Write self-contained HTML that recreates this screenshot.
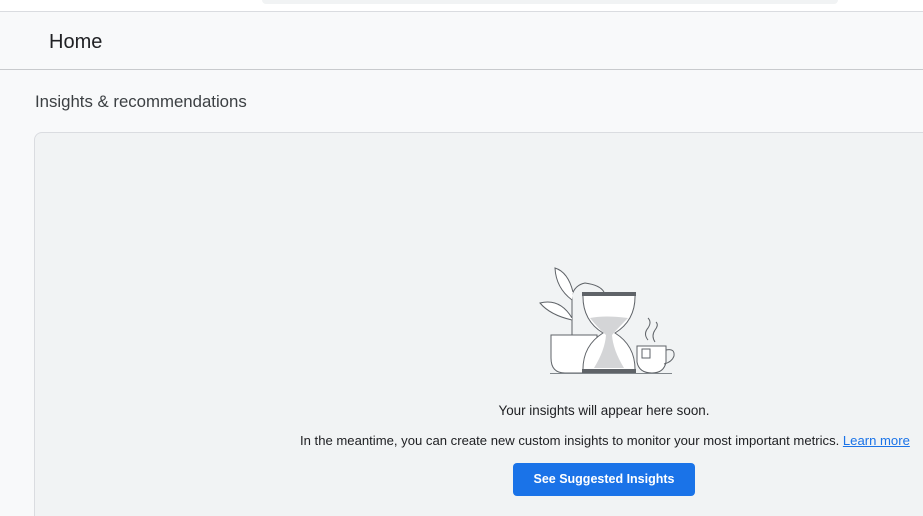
<!DOCTYPE html>
<html style="height:516px;overflow:hidden"><head><meta charset="utf-8"><style>
body{margin:0;width:923px;height:516px;overflow:hidden;background:#f8f9fa;font-family:"Liberation Sans",Arial,sans-serif;position:relative}
.top{position:absolute;left:0;top:0;width:923px;height:11px;background:#fff;border-bottom:1px solid #dadce0}
.search{position:absolute;left:262px;top:0;width:576px;height:4px;background:#f1f3f4;border-radius:0 0 6px 6px}
.home{position:absolute;left:49px;top:31px;font-size:20px;color:#202124}
.hl{position:absolute;left:0;top:69px;width:923px;height:1px;background:#c8cacd}
.ins{position:absolute;left:35px;top:92px;font-size:16.8px;color:#3c4043}
.card{position:absolute;left:34px;top:132px;width:888px;height:383px;background:#f1f3f4;border:1px solid #dadce0;border-right:none;border-bottom:none;border-radius:8px 0 0 0}
.t1{position:absolute;left:0;width:1208px;top:403px;text-align:center;font-size:13.4px;color:#202124}
.t2{position:absolute;left:300px;top:433px;font-size:13.1px;color:#202124;white-space:nowrap}
.t2 a{color:#1a73e8;text-decoration:underline}
.btn{position:absolute;left:513px;top:463px;width:182px;height:33px;background:#1a73e8;border-radius:4px;color:#fff;font-size:12.5px;font-weight:bold;text-align:center;line-height:33px}
</style></head><body>
<div class="top"><div class="search"></div></div>
<div class="home">Home</div>
<div class="hl"></div>
<div class="ins">Insights &amp; recommendations</div>
<div class="card"></div>
<svg style="position:absolute;left:530px;top:260px" width="160" height="125" viewBox="530 260 160 125" fill="none" stroke="#5f6368" stroke-width="1">
<path d="M572 335 V295 Q575 285 585 283 Q600 285 604 292" />
<path d="M572 300 Q556 288 555 268 Q568 272 573 292" fill="#fff"/>
<path d="M572 320 Q550 315 540 303 Q560 298 572 318" fill="#fff"/>
<path d="M551 335 H597 V373 H565 Q551 373 551 358 Z" fill="#fff"/>
<path d="M583 294 H635 Q636 320 615 333 Q636 346 635 372 H583 Q582 346 603 333 Q582 320 583 294 Z" fill="#fff"/>
<path d="M590 318 Q605 315 628 318 Q618 328 612 335 Q613 350 624 368 H594 Q605 350 606 335 Q598 328 590 318Z" fill="#d4d5d7" stroke="none"/>
<rect x="582" y="292" width="54" height="4" fill="#5f6368" stroke="none"/>
<rect x="582" y="369" width="54" height="4" fill="#5f6368" stroke="none"/>
<path d="M637 346 H666 V362 Q664 373 652 373 Q639 373 637 362 Z" fill="#fff"/>
<path d="M666 350 Q675 348 674 356 Q672 362 664 364"/>
<rect x="642" y="349" width="8" height="9" fill="#fff"/>
<path d="M648 340 Q643 334 648 328 Q652 322 648 318 M655 342 Q651 336 655 330 Q659 325 656 322"/>
<path d="M550 373.5 H672" stroke="#80868b"/>
</svg>
<div class="t1">Your insights will appear here soon.</div>
<div class="t2">In the meantime, you can create new custom insights to monitor your most important metrics. <a>Learn more</a></div>
<div class="btn">See Suggested Insights</div>
</body></html>
